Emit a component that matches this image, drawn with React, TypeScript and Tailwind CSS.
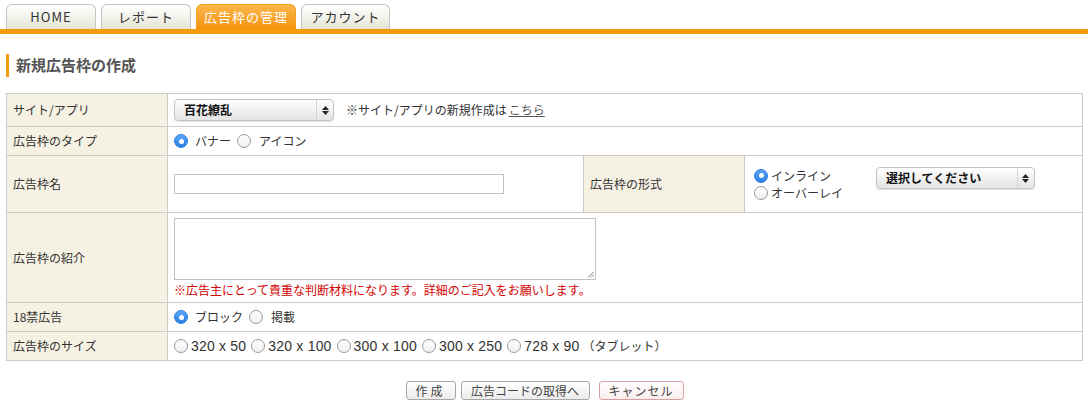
import React from 'react';

const font = { fontFamily: '"Noto Sans CJK JP", "Liberation Sans", sans-serif' };
const num = { fontFamily: '"Liberation Sans", "Noto Sans CJK JP", sans-serif' };

function Radio({ checked }: { checked?: boolean }) {
  return checked ? (
    <span className="inline-flex h-[14px] w-[14px] shrink-0 items-center justify-center rounded-full border border-[#2f7fe0] bg-gradient-to-b from-[#5aa7f5] to-[#2a7ee6]">
      <span className="h-[5px] w-[5px] rounded-full bg-white" />
    </span>
  ) : (
    <span className="inline-block h-[14px] w-[14px] shrink-0 rounded-full border border-[#9a9a9a] bg-gradient-to-b from-white to-[#f0f0f0]" />
  );
}

function Select({ label, w }: { label: string; w: string }) {
  return (
    <div className={`flex h-[22px] ${w} items-center rounded-[4px] border border-[#c4c4c4] bg-gradient-to-b from-white to-[#e4e4e4] shadow-[0_1px_1px_rgba(0,0,0,0.12)]`}>
      <span className="flex-1 pl-[9px] text-[12px] font-bold text-[#111]">{label}</span>
      <span className="flex h-full w-[17px] flex-col items-center justify-center gap-[1px] border-l border-[#d2d2d2]">
        <svg width="7" height="4" viewBox="0 0 7 4"><path d="M3.5 0L7 4H0z" fill="#222" /></svg>
        <svg width="7" height="4" viewBox="0 0 7 4"><path d="M0 0h7L3.5 4z" fill="#222" /></svg>
      </span>
    </div>
  );
}

const tabs = ['HOME', 'レポート', '広告枠の管理', 'アカウント'];
const tabW = ['w-[90px]', 'w-[90px]', 'w-[100px]', 'w-[89px]'];

export default function App() {
  const label = 'border border-[#cccccc] bg-[#f5f1e3] pl-[6px] text-left align-middle font-normal text-[#333]';
  const cell = 'border border-[#cccccc] bg-white px-[6px] align-middle';

  return (
    <div className="min-h-[407px] bg-white text-[12px] text-[#333]" style={font}>
      {/* タブ */}
      <div className="flex items-end gap-[5px] px-[6px] pt-[4px]">
        {tabs.map((t, i) => (
          <div
            key={t}
            className={`flex h-[25px] ${tabW[i]} items-center justify-center rounded-t-[6px] border border-b-0 text-[13px] tracking-[1px] ${
              i === 2
                ? 'border-[#f0a020] bg-gradient-to-b from-[#fdb648] to-[#f49400] text-white'
                : 'border-[#c4c4c4] bg-gradient-to-b from-white via-[#f3f3ec] to-[#e3e3d2] text-[#333]'
            }`}
          >
            {t}
          </div>
        ))}
      </div>
      <div className="h-[5px] bg-[#f59a0c]" />

      {/* 見出し */}
      <div className="mx-[6px] mt-[20px] flex h-[23px] items-center border-l-[3px] border-[#f59a0c] pl-[7px]">
        <h2 className="text-[15px] font-bold text-[#555]">新規広告枠の作成</h2>
      </div>

      {/* フォーム */}
      <table className="ml-[6px] mt-[16px] w-[1077px] border-collapse">
        <colgroup>
          <col className="w-[161px]" />
          <col className="w-[416px]" />
          <col className="w-[161px]" />
          <col />
        </colgroup>
        <tbody>
          <tr className="h-[33px]">
            <th className={label}>サイト/アプリ</th>
            <td className={cell} colSpan={3}>
              <div className="flex items-center gap-[12px]">
                <Select label="百花繚乱" w="w-[160px]" />
                <span>
                  ※サイト/アプリの新規作成は<span className="ml-[2px] text-[#555] underline">こちら</span>
                </span>
              </div>
            </td>
          </tr>
          <tr className="h-[29px]">
            <th className={label}>広告枠のタイプ</th>
            <td className={cell} colSpan={3}>
              <div className="flex items-center">
                <Radio checked />
                <span className="ml-[7px] mr-[6px]">バナー</span>
                <Radio />
                <span className="ml-[8px]">アイコン</span>
              </div>
            </td>
          </tr>
          <tr className="h-[57px]">
            <th className={label}>広告枠名</th>
            <td className={cell}>
              <div className="h-[20px] w-[330px] border border-[#c2c2c2] bg-white" />
            </td>
            <th className={label}>広告枠の形式</th>
            <td className={`${cell} pl-[9px]`}>
              <div className="flex items-start">
                <div className="flex flex-col leading-[17px]">
                  <div className="flex items-center gap-[3px]">
                    <Radio checked />
                    <span>インライン</span>
                  </div>
                  <div className="flex items-center gap-[3px]">
                    <Radio />
                    <span>オーバーレイ</span>
                  </div>
                </div>
                <div className="ml-[33px]">
                  <Select label="選択してください" w="w-[159px]" />
                </div>
              </div>
            </td>
          </tr>
          <tr className="h-[90px]">
            <th className={label}>広告枠の紹介</th>
            <td className={`${cell} pb-[5px] pt-[5px] align-top`} colSpan={3}>
              <div className="relative h-[62px] w-[422px] border border-[#c2c2c2] bg-white">
                <svg className="absolute bottom-[1px] right-[1px]" width="7" height="7" viewBox="0 0 7 7">
                  <path d="M6.5 1L1 6.5M6.5 4L4 6.5" stroke="#777" strokeWidth="1" />
                </svg>
              </div>
              <p className="mt-[3px] leading-[14px] text-[#d40000]">
                ※広告主にとって貴重な判断材料になります。詳細のご記入をお願いします。
              </p>
            </td>
          </tr>
          <tr className="h-[29px]">
            <th className={label}>18禁広告</th>
            <td className={cell} colSpan={3}>
              <div className="flex items-center">
                <Radio checked />
                <span className="ml-[7px] mr-[6px]">ブロック</span>
                <Radio />
                <span className="ml-[8px]">掲載</span>
              </div>
            </td>
          </tr>
          <tr className="h-[29px]">
            <th className={label}>広告枠のサイズ</th>
            <td className={cell} colSpan={3}>
              <div className="flex items-center">
                {['320 x 50', '320 x 100', '300 x 100', '300 x 250'].map((s) => (
                  <span key={s} className="mr-[5px] flex items-center gap-[3px]">
                    <Radio />
                    <span className="text-[14px] tracking-[0.2px] text-[#333]" style={num}>{s}</span>
                  </span>
                ))}
                <span className="flex items-center gap-[3px]">
                  <Radio />
                  <span className="text-[14px] tracking-[0.2px]" style={num}>728 x 90</span>
                  <span className="text-[12px]">（タブレット）</span>
                </span>
              </div>
            </td>
          </tr>
        </tbody>
      </table>

      {/* ボタン */}
      <div className="mt-[20px] flex justify-center gap-[5px] pl-[1px]">
        <button className="h-[19px] w-[50px] rounded-[3px] border border-[#a8a8a8] bg-gradient-to-b from-white to-[#ececec] text-[12px] tracking-[3px] text-[#444]">
          作成
        </button>
        <button className="h-[19px] w-[129px] rounded-[3px] border border-[#a8a8a8] bg-gradient-to-b from-white to-[#ececec] text-[12px] text-[#444]">
          広告コードの取得へ
        </button>
        <button className="ml-[4px] h-[19px] w-[85px] rounded-[3px] border border-[#d8a0a0] bg-gradient-to-b from-white to-[#fbeeee] text-[12px] tracking-[1px] text-[#444]">
          キャンセル
        </button>
      </div>
    </div>
  );
}
